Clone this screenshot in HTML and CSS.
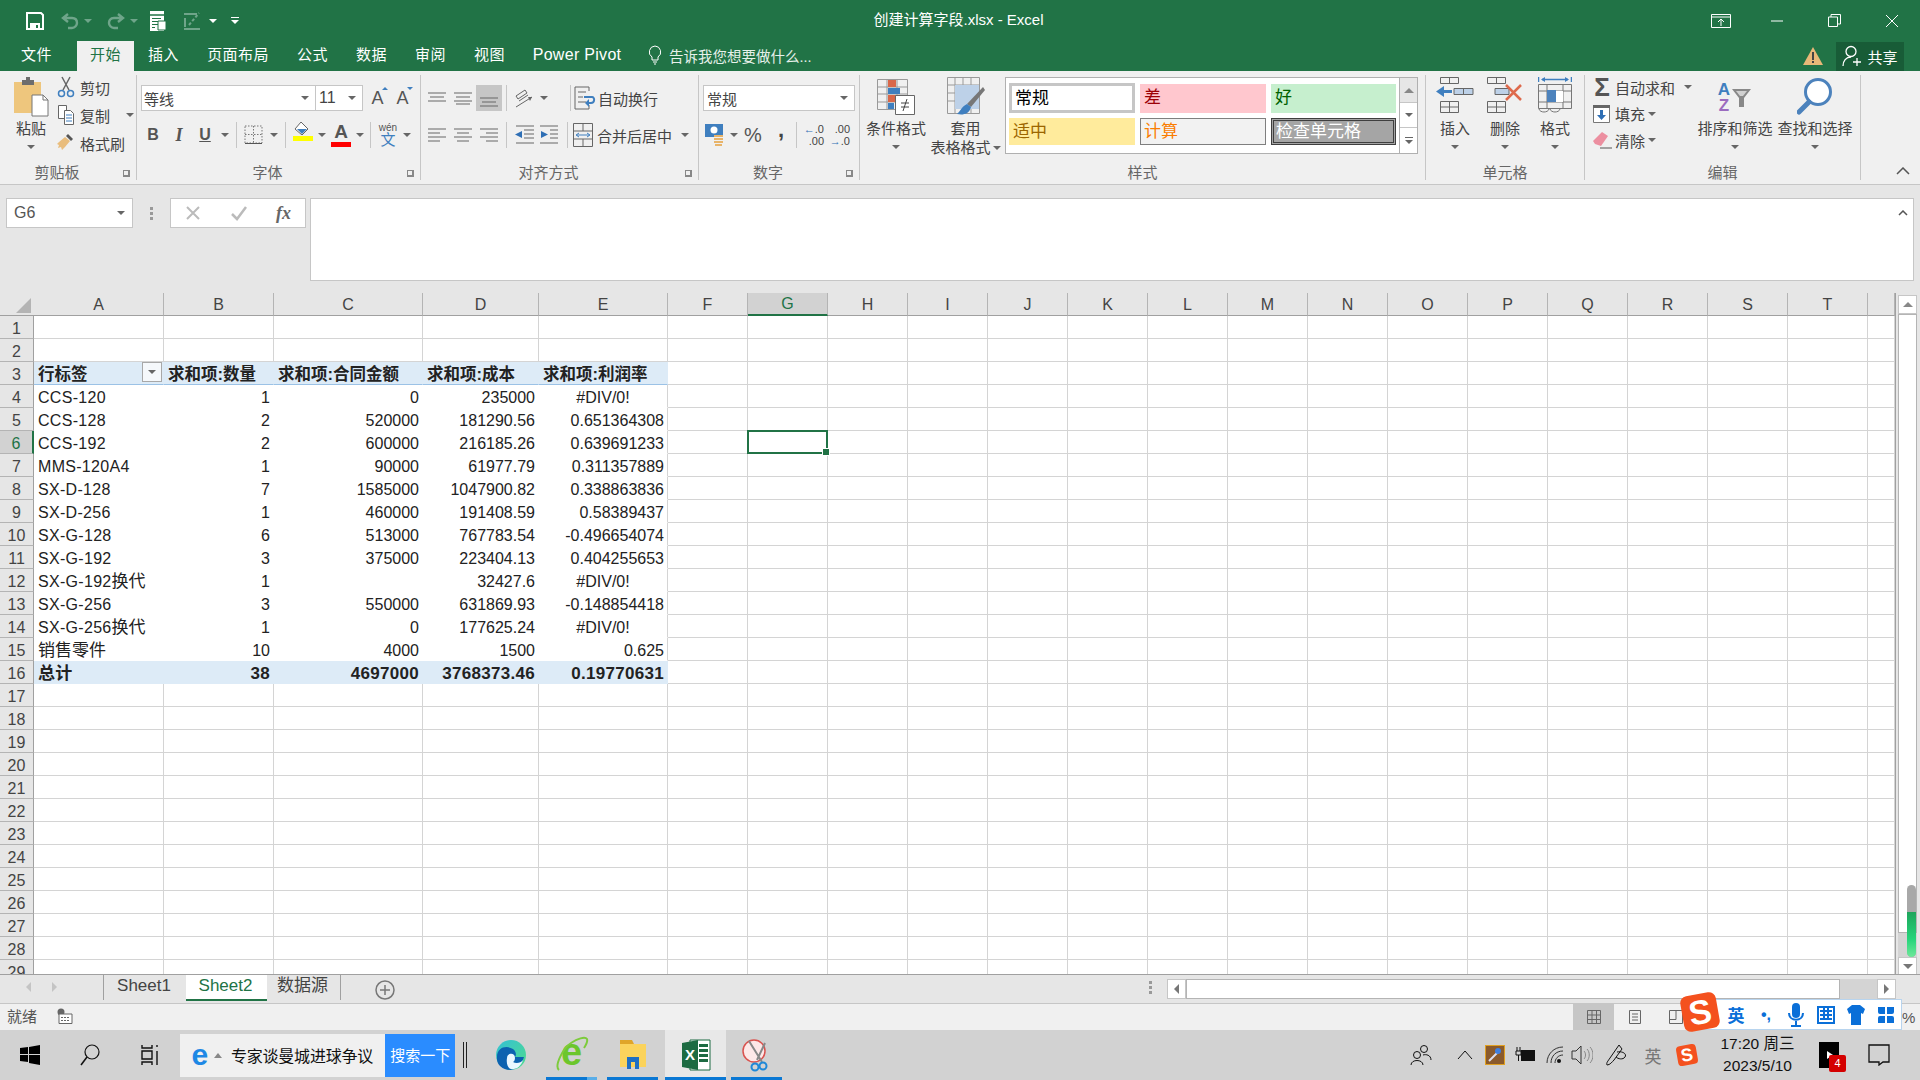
FILE: index.html
```html
<!DOCTYPE html>
<html lang="zh-CN">
<head>
    <meta charset="UTF-8">
    <title>创建计算字段.xlsx - Excel</title>
    <link rel="stylesheet" href="styles.css">
</head>
<body>

    <!-- title bar -->
    <div class="titlebar">
        <div class="qat">
            <span class="qat-btn save"><svg width="18" height="18" viewBox="0 0 18 18"><path d="M1 1h14l2 2v14H1z" fill="none" stroke="#fff" stroke-width="2"/><path d="M4 2h9v5H4z" fill="#217346"/><path d="M4 11h10v6H4z" fill="#fff"/><path d="M10 13h2v3h-2z" fill="#217346"/></svg></span>
            <span class="qat-btn undo"><svg width="20" height="18" viewBox="0 0 20 18"><path d="M8 2 3 6l5 4M3 6h9c4 0 5 3 5 5s-2 5-5 5H8" fill="none" stroke="#6fa58a" stroke-width="2.4"/></svg></span>
            <i class="caret caret-dim"></i>
            <span class="qat-btn redo"><svg width="20" height="18" viewBox="0 0 20 18"><path d="m12 2 5 4-5 4m5-4H8c-4 0-5 3-5 5s2 5 5 5h4" fill="none" stroke="#6fa58a" stroke-width="2.4"/></svg></span>
            <i class="caret caret-dim"></i>
            <span class="qat-btn preview"><svg width="20" height="22" viewBox="0 0 20 22"><path d="M2 1h14v20H2z" fill="#fff"/><path d="M2 5h14" stroke="#217346" stroke-width="1.5"/><path d="M4 8h9v1H4zm0 3h6v1H4zm0 3h6v1H4zm0 3h3v1H4z" fill="#217346"/><path d="M10 11h8v9h-8z" fill="#fff" stroke="#217346"/></svg></span>
            <span class="qat-btn dotted"><svg width="22" height="22" viewBox="0 0 22 22"><path d="M3 3h13v2H3zM3 8h2v9H3zM3 18h16v2H3z" fill="#6fa58a"/><path d="m8 15 10-12" stroke="#6fa58a" stroke-width="2" stroke-dasharray="3 2"/></svg></span>
            <i class="caret caret-white"></i>
            <span class="qat-custom"><i class="dash"></i><i class="caret caret-white"></i></span>
        </div>
        <div class="doc-title">创建计算字段.xlsx - Excel</div>
        <div class="window-btns">
            <span class="win-btn"><svg width="20" height="14" viewBox="0 0 20 14"><path d="M.5.5h19v13H.5zM1 3h18M10 12V5M7 8l3-3 3 3" fill="none" stroke="#fff"/></svg></span>
            <span class="win-btn"><svg width="14" height="2" viewBox="0 0 14 2"><path d="M0 1h12" stroke="#fff"/></svg></span>
            <span class="win-btn"><svg width="13" height="13" viewBox="0 0 13 13"><path d="M.5 3h9v9.5h-9zM3 3V.5h9.5V10H10" fill="none" stroke="#fff"/></svg></span>
            <span class="win-btn"><svg width="14" height="14" viewBox="0 0 14 14"><path d="m1 1 12 12M13 1 1 13" stroke="#fff"/></svg></span>
        </div>
    </div>

    <!-- ribbon tabs -->
    <div class="tabbar">
        <span class="tab tab-file">文件</span>
        <span class="tab tab-active">开始</span>
        <span class="tab">插入</span>
        <span class="tab tab-four">页面布局</span>
        <span class="tab">公式</span>
        <span class="tab">数据</span>
        <span class="tab">审阅</span>
        <span class="tab">视图</span>
        <span class="tab tab-pivot">Power Pivot</span>
        <span class="tell-me">
            <svg width="14" height="20" viewBox="0 0 14 20"><path d="M7 1a6 6 0 0 0-3 11v3h6v-3A6 6 0 0 0 7 1zM5 17h4M6 19h2" fill="none" stroke="#fff"/></svg>
            告诉我您想要做什么...
        </span>
        <span class="warn"><svg width="20" height="18" viewBox="0 0 20 18"><path d="M10 0 20 18H0z" fill="#e8b878"/><path d="M9 5h2v8H9zm0 9h2v2H9z" fill="#444"/></svg></span>
        <span class="share">
            <svg width="22" height="22" viewBox="0 0 22 22"><circle cx="9" cy="6.5" r="5" fill="none" stroke="#fff" stroke-width="1.3"/><path d="M1 21c0-5 3-9 8-9M15 13v8M11 17h8" fill="none" stroke="#fff" stroke-width="1.3"/></svg>
            共享
        </span>
    </div>

    <!-- ribbon -->
    <div class="ribbon">
        <div class="group group-clip">
            <div class="group-body">
                <div class="large large-paste">
                    <div class="large-icon">
                        <svg width="36" height="40" viewBox="0 0 36 40"><path d="M1 5h27v31H1z" fill="#eec67d"/><path d="M9 3h4V0h4v3h4v5H9z" fill="#6d6d6d"/><path d="M19 18h11l5 5v16H19z" fill="#fff" stroke="#777"/><path d="M30 18v5h5" fill="none" stroke="#777"/></svg>
                    </div>
                    <div class="large-label">粘贴</div>
                    <i class="caret caret-low"></i>
                </div>
                <div class="small-col">
                    <div class="small-row">
                        <span class="small-icon"><svg width="18" height="22" viewBox="0 0 18 22"><path d="m5 1 7 13M13 1 6 14" stroke="#666" stroke-width="1.5"/><circle cx="4.5" cy="17.5" r="3" fill="none" stroke="#3f7fbf" stroke-width="1.5"/><circle cx="13.5" cy="17.5" r="3" fill="none" stroke="#3f7fbf" stroke-width="1.5"/></svg></span>
                        剪切
                    </div>
                    <div class="small-row">
                        <span class="small-icon"><svg width="18" height="22" viewBox="0 0 18 22"><path d="M1.5 1.5h8v13h-8z" fill="#fff" stroke="#666"/><path d="M7.5 6.5h6l3 3v11h-9z" fill="#fff" stroke="#666"/><path d="M9 11h6M9 14h6M9 17h6" stroke="#3f7fbf"/></svg></span>
                        复制<i class="caret caret-copy"></i>
                    </div>
                    <div class="small-row">
                        <span class="small-icon"><svg width="20" height="20" viewBox="0 0 20 20"><path d="m12 1 5 5-2 2-5-5z" fill="#555"/><path d="M9 4 3 9l-2 2 2 1-1 3 3-1 1 3 3-3 5-6z" fill="#e9bd7d"/></svg></span>
                        格式刷
                    </div>
                </div>
            </div>
            <div class="group-label label-left">剪贴板</div>
            <i class="launcher"></i>
        </div>

        <div class="group group-font">
            <div class="group-body group-rows">
                <div class="tool-row">
                    <div class="select select-font">等线<i class="caret"></i></div>
                    <div class="select select-size">11<i class="caret"></i></div>
                    <span class="font-resize">A<i class="mini-up"></i></span>
                    <span class="font-resize">A<i class="mini-down"></i></span>
                </div>
                <div class="tool-row tool-row-low">
                    <span class="tool tool-b">B</span>
                    <span class="tool tool-i">I</span>
                    <span class="tool tool-u">U</span>
                    <span class="tool-caret"><i class="caret"></i></span>
                    <i class="sep"></i>
                    <span class="tool"><svg width="20" height="20" viewBox="0 0 20 20"><path d="M1 1h17v17H1zM9.5 1v17M1 9.5h17" fill="none" stroke="#777" stroke-dasharray="1.5 1.5"/><path d="M1 18.5h17" stroke="#555"/></svg></span>
                    <span class="tool-caret"><i class="caret"></i></span>
                    <i class="sep"></i>
                    <span class="tool color-tool"><svg width="20" height="13" viewBox="0 0 20 13"><path d="m8 0 7 7-6 6-7-6z" fill="#fff" stroke="#666"/><path d="m4 7 5 5 5-5z" fill="#3f7fbf"/></svg><i class="color-bar color-yellow"></i></span>
                    <span class="tool-caret tool-caret-tight"><i class="caret"></i></span>
                    <span class="tool color-tool font-color">A<i class="color-bar color-red"></i></span>
                    <span class="tool-caret tool-caret-tight"><i class="caret"></i></span>
                    <i class="sep"></i>
                    <span class="tool wen"><small>wén</small>文</span>
                    <span class="tool-caret tool-caret-tight"><i class="caret"></i></span>
                </div>
            </div>
            <div class="group-label label-left">字体</div>
            <i class="launcher"></i>
        </div>

        <div class="group group-align">
            <div class="group-body group-rows">
                <div class="tool-row">
                    <span class="tool"><svg width="18" height="12" viewBox="0 0 18 12"><path d="M0 1h18M2 5h14M0 9h18" stroke="#666"/></svg></span>
                    <span class="tool"><svg width="18" height="14" viewBox="0 0 18 14"><path d="M0 2h18M2 6h14M0 10h18M2 13h14" stroke="#666"/></svg></span>
                    <span class="tool tool-on"><svg width="18" height="20" viewBox="0 0 18 20"><path d="M0 10h18M2 14h14M0 18h18" stroke="#666"/></svg></span>
                    <i class="sep"></i>
                    <span class="tool"><svg width="20" height="20" viewBox="0 0 20 20"><path d="m2 8 9-6 2 3-9 6zM5 13l9-6M2 19 18 9" fill="none" stroke="#666"/><path d="m18 9-4 0 2 4z" fill="#666"/></svg></span>
                    <span class="tool-caret"><i class="caret"></i></span>
                    <i class="sep sep-far"></i>
                    <span class="small-icon small-icon-wrap"><svg width="22" height="24" viewBox="0 0 22 24"><path d="M1 1h14v4M1 1v22h14v-4" fill="none" stroke="#666"/><path d="M4 6h8M4 11h5M4 16h8" stroke="#666"/><path d="M10 11h8c3 0 3 6-1 6h-3" fill="none" stroke="#3f7fbf" stroke-width="2"/><path d="m15 13-4 4 4 4z" fill="#3f7fbf"/></svg></span>
                    <span class="row-text">自动换行</span>
                </div>
                <div class="tool-row tool-row-low">
                    <span class="tool"><svg width="18" height="14" viewBox="0 0 18 14"><path d="M0 1h18M0 5h12M0 9h18M0 13h12" stroke="#666"/></svg></span>
                    <span class="tool"><svg width="18" height="14" viewBox="0 0 18 14"><path d="M0 1h18M3 5h12M0 9h18M3 13h12" stroke="#666"/></svg></span>
                    <span class="tool"><svg width="18" height="14" viewBox="0 0 18 14"><path d="M0 1h18M6 5h12M0 9h18M6 13h12" stroke="#666"/></svg></span>
                    <i class="sep"></i>
                    <span class="tool"><svg width="20" height="20" viewBox="0 0 20 20"><path d="M2 1h18M10 5h10M10 9h10M10 13h10M2 18h18" stroke="#666"/><path d="M8 6v7L1 9.5z" fill="#2f6fb5"/></svg></span>
                    <span class="tool"><svg width="20" height="20" viewBox="0 0 20 20"><path d="M0 1h18M10 5h8M10 9h8M10 13h8M0 18h18" stroke="#666"/><path d="M1 6v7l7-3.5z" fill="#2f6fb5"/></svg></span>
                    <i class="sep sep-merge"></i>
                    <span class="small-icon small-icon-merge"><svg width="20" height="24" viewBox="0 0 20 24"><path d="M.5.5h19v23H.5zM.5 8h19M.5 16h19M10 .5V8M10 16v7.5" fill="none" stroke="#666"/><path d="M4 12h12M6 10l-3 2 3 2M14 10l3 2-3 2" fill="none" stroke="#3f7fbf"/></svg></span>
                    <span class="row-text">合并后居中</span><i class="caret caret-merge"></i>
                </div>
            </div>
            <div class="group-label label-left">对齐方式</div>
            <i class="launcher"></i>
        </div>

        <div class="group group-number">
            <div class="group-body group-rows">
                <div class="tool-row">
                    <div class="select select-format">常规<i class="caret"></i></div>
                </div>
                <div class="tool-row tool-row-low">
                    <span class="tool"><svg width="20" height="24" viewBox="0 0 20 24"><path d="M0 1h18v13H0z" fill="#3f7fbf"/><circle cx="9" cy="7" r="3.5" fill="#fff"/><path d="M9 12h9v2H9zm0 3h9v2H9zm0 3h9v2H9zm1 3h7v2h-7z" fill="#e8b46a"/></svg></span>
                    <span class="tool-caret tool-caret-tight"><i class="caret"></i></span>
                    <span class="tool tool-percent">%</span>
                    <span class="tool tool-comma">,</span>
                    <i class="sep"></i>
                    <span class="tool dec-tool"><em class="blue-arrow">←</em>.0<br>.00</span>
                    <span class="tool dec-tool">.00<br><em class="blue-arrow">→</em>.0</span>
                </div>
            </div>
            <div class="group-label label-left">数字</div>
            <i class="launcher"></i>
        </div>

        <div class="group group-styles">
            <div class="group-body">
                <div class="large large-cond">
                    <div class="large-icon">
                        <svg width="38" height="38" viewBox="0 0 38 38"><path d="M.5 2.5h30v30H.5zM10 2.5v30M20 2.5v30M.5 10h30M.5 17h30M.5 25h30" fill="none" stroke="#999"/><path d="M11 3h8v7h-8z" fill="#d9684a"/><path d="M11 11h12v6H11z" fill="#3f7fbf"/><path d="M11 18h9v7h-9z" fill="#d9684a"/><path d="M11 26h6v6h-6z" fill="#3f7fbf"/><path d="M18.5 18.5h19v19h-19z" fill="#fff" stroke="#666"/><path d="M24 26h8M24 30h8M30 22l-4 12" stroke="#444"/></svg>
                    </div>
                    <div class="large-label">条件格式</div>
                    <i class="caret caret-low"></i>
                </div>
                <div class="large large-table">
                    <div class="large-icon">
                        <svg width="38" height="42" viewBox="0 0 38 42"><path d="M.5.5h32v36H.5zM8 .5v36M16 .5v36M24 .5v36M.5 8h32M.5 16h32M.5 24h32" fill="none" stroke="#999"/><path d="M8 8h24v24H8z" fill="#bdd1e8"/><path d="M36 10 38 13 24 30l-4-3z" fill="#777"/><path d="M20 27l4 3c-2 8-9 8-14 7 3-2 4-7 10-10z" fill="#3f7fbf"/></svg>
                    </div>
                    <div class="large-label">套用</div>
                    <div class="large-label label-caret">表格格式<i class="caret"></i></div>
                </div>
                <div class="gallery">
                    <div class="gallery-items">
                        <span class="gal gal-normal">常规</span>
                        <span class="gal gal-bad">差</span>
                        <span class="gal gal-good">好</span>
                        <span class="gal gal-neutral">适中</span>
                        <span class="gal gal-calc">计算</span>
                        <span class="gal gal-check">检查单元格</span>
                    </div>
                    <div class="gallery-scroll">
                        <span class="gal-btn gal-btn-up"><i class="tri-up"></i></span>
                        <span class="gal-btn"><i class="caret"></i></span>
                        <span class="gal-btn gal-btn-more"><i class="dash dash-dark"></i><i class="caret"></i></span>
                    </div>
                </div>
            </div>
            <div class="group-label">样式</div>
        </div>

        <div class="group group-cells">
            <div class="group-body">
                <div class="large large-cell">
                    <div class="large-icon">
                        <svg width="38" height="36" viewBox="0 0 38 36"><path d="M4.5.5h18v6h-18zM13.5.5v6M4.5 24.5h18v11h-18zM4.5 30h18M13.5 24.5v11" fill="none" stroke="#666"/><path d="M18 11.5h19v6H18zM27.5 11.5v6" fill="#bdd1e8" stroke="#666"/><path d="M16 13h-8V9L0 14.5 8 20v-4h8z" fill="#3f7fbf"/></svg>
                    </div>
                    <div class="large-label">插入</div>
                    <i class="caret caret-low"></i>
                </div>
                <div class="large large-cell">
                    <div class="large-icon">
                        <svg width="36" height="36" viewBox="0 0 36 36"><path d="M.5.5h18v6H.5zM9.5.5v6M.5 24.5h18v11H.5zM.5 30h18M9.5 24.5v11" fill="none" stroke="#666"/><path d="M8 11.5h14v6H8z" fill="#bdd1e8" stroke="#666"/><path d="m19 8 15 15M34 8 19 23" stroke="#de6a4c" stroke-width="2.5"/></svg>
                    </div>
                    <div class="large-label">删除</div>
                    <i class="caret caret-low"></i>
                </div>
                <div class="large large-cell">
                    <div class="large-icon">
                        <svg width="34" height="38" viewBox="0 0 34 38"><path d="M.5 0v5M33.5 0v5M4 2.5h26" stroke="#3f7fbf" stroke-width="1.5" fill="none"/><path d="M7 0 3 2.5 7 5zM27 0l4 2.5L27 5z" fill="#3f7fbf"/><path d="M.5 7.5h33v24H.5zM.5 14h33M.5 25h33M9 7.5v24M25 7.5v24" fill="none" stroke="#777"/><path d="M9 14h16v11H9z" fill="#fff"/><path d="M9 13h9v12H9z" fill="#4c82bc"/><path d="M1 32c1 4 9 4 10 0M12 32c1 4 9 4 10 0" fill="none" stroke="#777"/></svg>
                    </div>
                    <div class="large-label">格式</div>
                    <i class="caret caret-low"></i>
                </div>
            </div>
            <div class="group-label">单元格</div>
        </div>

        <div class="group group-edit">
            <div class="group-body">
                <div class="small-col small-col-edit">
                    <div class="small-row">
                        <span class="small-icon small-icon-sum">Σ</span>
                        <span class="edit-text">自动求和</span><i class="caret caret-sum"></i>
                    </div>
                    <div class="small-row">
                        <span class="small-icon"><svg width="18" height="18" viewBox="0 0 18 18"><path d="M.5.5h16v17H.5z" fill="#fff" stroke="#777"/><path d="M0 0h17v3H0z" fill="#666"/><path d="M7 5h3v5h3l-4.5 5L4 10h3z" fill="#2f6fb5"/></svg></span>
                        <span class="edit-text">填充</span><i class="caret caret-near"></i>
                    </div>
                    <div class="small-row">
                        <span class="small-icon"><svg width="20" height="18" viewBox="0 0 20 18"><path d="m10 1 6 4-7 10-6-2-2-3z" fill="#ec8fa0"/><path d="M8 17h12" stroke="#555"/></svg></span>
                        <span class="edit-text">清除</span><i class="caret caret-near"></i>
                    </div>
                </div>
                <div class="large large-edit">
                    <div class="large-icon sort-icon">
                        <span class="az"><b class="az-a">A</b><b class="az-z">Z</b></span>
                        <svg width="20" height="18" viewBox="0 0 20 18"><path d="M0 0h19l-7 9v9H7V9z" fill="#888"/><path d="M4 2h11l-4 5H8z" fill="#d0d0d0"/></svg>
                    </div>
                    <div class="large-label">排序和筛选</div>
                    <i class="caret caret-low"></i>
                </div>
                <div class="large large-edit">
                    <div class="large-icon">
                        <svg width="36" height="38" viewBox="0 0 36 38"><circle cx="21" cy="15" r="12.5" fill="#fff" stroke="#4c82bc" stroke-width="3"/><path d="m12 25-10 10" stroke="#4c82bc" stroke-width="5" stroke-linecap="round"/></svg>
                    </div>
                    <div class="large-label">查找和选择</div>
                    <i class="caret caret-low"></i>
                </div>
            </div>
            <div class="group-label">编辑</div>
        </div>

        <div class="ribbon-end">
            <svg width="14" height="8" viewBox="0 0 14 8"><path d="m1 7 6-6 6 6" fill="none" stroke="#555" stroke-width="1.5"/></svg>
        </div>
    </div>

    <!-- formula bar -->
    <div class="formula-area">
        <div class="name-box">G6<i class="caret"></i></div>
        <div class="grip"><i></i><i></i><i></i></div>
        <div class="fx-box">
            <svg width="16" height="16" viewBox="0 0 16 16"><path d="m2 2 12 12M14 2 2 14" stroke="#bbb" stroke-width="2"/></svg>
            <svg width="18" height="16" viewBox="0 0 18 16"><path d="m2 9 5 5L16 2" fill="none" stroke="#bbb" stroke-width="2.5"/></svg>
            <span class="fx-text">fx</span>
        </div>
        <div class="formula-input">
            <svg width="10" height="6" viewBox="0 0 10 6"><path d="m1 5 4-4 4 4" fill="none" stroke="#555" stroke-width="1.5"/></svg>
        </div>
    </div>

    <!-- sheet -->
    <div class="sheet">
        <div class="grid-wrap">
            <table class="grid" id="grid"></table>
        </div>
        <div class="vscroll">
            <span class="scroll-btn"><i class="tri-up"></i></span>
            <span class="vthumb"></span>
            <span class="vtrack"></span>
            <span class="scroll-btn"><i class="tri-down"></i></span>
            <span class="green-meter"><i></i></span>
        </div>
    </div>

    <!-- sheet tabs -->
    <div class="sheet-tabs">
        <div class="tab-nav"><i class="nav-left"></i><i class="nav-right"></i></div>
        <span class="sheet-tab">Sheet1</span>
        <span class="sheet-tab sheet-tab-active">Sheet2</span>
        <span class="sheet-tab sheet-tab-last">数据源</span>
        <span class="add-sheet"><svg width="20" height="20" viewBox="0 0 20 20"><circle cx="10" cy="10" r="9" fill="none" stroke="#777" stroke-width="1.5"/><path d="M10 5v10M5 10h10" stroke="#777" stroke-width="1.5"/></svg></span>
        <div class="grip grip-tabs"><i></i><i></i><i></i></div>
        <div class="hscroll">
            <span class="scroll-btn scroll-btn-h"><i class="tri-left"></i></span>
            <span class="hthumb"></span>
            <span class="htrack"></span>
            <span class="scroll-btn scroll-btn-h"><i class="tri-right"></i></span>
        </div>
    </div>

    <!-- status bar -->
    <div class="statusbar">
        <span class="status-text">就绪</span>
        <span class="macro"><svg width="16" height="16" viewBox="0 0 16 16"><circle cx="4" cy="4" r="3.5" fill="#666"/><path d="M2 6h13v9.5H2z" fill="#fff" stroke="#666"/><path d="M4 9h2v1H4zm3 0h2v1H7zm3 0h2v1h-2zm-6 3h2v1H4zm3 0h2v1H7zm3 0h2v1h-2z" fill="#666"/></svg></span>
        <div class="view-btns">
            <span class="view-btn view-on"><svg width="14" height="14" viewBox="0 0 14 14"><path d="M.5.5h13v13H.5zM5 .5v13M9.5.5v13M.5 5h13M.5 9.5h13" fill="none" stroke="#666"/></svg></span>
            <span class="view-btn"><svg width="14" height="14" viewBox="0 0 14 14"><path d="M1.5.5h11v13h-11zM4 4h6M4 7h6M4 10h6" fill="none" stroke="#666"/></svg></span>
            <span class="view-btn"><svg width="14" height="14" viewBox="0 0 14 14"><path d="M.5.5h13v13H.5zM7 .5v9H.5" fill="none" stroke="#666"/></svg></span>
        </div>
        <span class="zoom-text">%</span>
        <div class="sogou-bar">
            <span class="sogou-logo">S</span>
            <span class="sogou-item sogou-cn">英</span>
            <span class="sogou-item sogou-punct">•,</span>
            <span class="sogou-item"><svg width="16" height="24" viewBox="0 0 16 24"><rect x="4" y="0" width="8" height="15" rx="4" fill="#0a6fd8"/><path d="M1 10c0 9 14 9 14 0M8 18v4M3 23h10" fill="none" stroke="#0a6fd8" stroke-width="2"/></svg></span>
            <span class="sogou-item"><svg width="18" height="18" viewBox="0 0 18 18"><path d="M1 1h16v16H1z" fill="#fff" stroke="#0a6fd8" stroke-width="2"/><path d="M3 5h12M3 9h12M3 13h12M7 2v12M11 2v12" stroke="#0a6fd8" stroke-width="2"/></svg></span>
            <span class="sogou-item"><svg width="18" height="20" viewBox="0 0 18 20"><path d="M5 0h8l5 4-2 5-2-1v12H4V8L2 9 0 4z" fill="#0a6fd8"/></svg></span>
            <span class="sogou-item"><svg width="18" height="18" viewBox="0 0 18 18"><path d="M1 1h7v7H3a2 2 0 0 1-2-2zm16 0h-7v7h5a2 2 0 0 0 2-2zM1 17h7v-7H3a2 2 0 0 0-2 2zm16 0h-7v-7h5a2 2 0 0 1 2 2z" fill="#0a6fd8"/></svg></span>
        </div>
    </div>

    <!-- taskbar -->
    <div class="taskbar">
        <span class="task-icon"><svg width="20" height="20" viewBox="0 0 20 20"><path d="M0 3l8-1v7H0zm9-1 11-2v9H9zM0 10h8v7l-8-1zm9 0h11v10L9 18z" fill="#000"/></svg></span>
        <span class="task-icon"><svg width="20" height="22" viewBox="0 0 20 22"><circle cx="12" cy="8" r="7" fill="none" stroke="#111" stroke-width="1.2"/><path d="m7 13-6 8" stroke="#111" stroke-width="1.5"/></svg></span>
        <span class="task-icon"><svg width="22" height="22" viewBox="0 0 22 22"><path d="M3 1v3h10V1M3 21v-3h10v3M3 7h10v8H3zM18 1v2M18 7v14" fill="none" stroke="#111" stroke-width="1.4"/></svg></span>
        <div class="task-search">
            <span class="ie-mark">e</span><i class="tri-up tri-small"></i>
            <span class="task-search-text">专家谈曼城进球争议</span>
            <span class="task-search-btn">搜索一下</span>
        </div>
        <span class="task-pipe"></span>
        <span class="app app-edge"><svg width="32" height="32" viewBox="0 0 32 32"><defs><linearGradient id="edgeA" x1="0" y1="0" x2="1" y2="1"><stop offset="0" stop-color="#35c1d6"/><stop offset="1" stop-color="#4fdc8b"/></linearGradient></defs><circle cx="16" cy="16" r="15" fill="url(#edgeA)"/><path d="M2 18C2 8 12 6 18 10c4 3 3 7 2 8h9c-2 8-9 13-14 13C7 31 1 25 2 18z" fill="#0c62b0"/><path d="M12 19c0-5 8-6 8 0 0 3-2 4-2 4 3 2 8 1 10-2-2 7-8 10-12 9-3-1-5-5-4-11z" fill="#eaf7ff"/></svg></span>
        <span class="app run"><span class="ie-green">e</span><svg class="ie-ring" width="34" height="36" viewBox="0 0 34 36"><path d="M4 34C-1 30 8 12 16 7c6-4 14-7 16-4 1 3-1 6-3 9" fill="none" stroke="#7dcb3c" stroke-width="2"/></svg><i class="run-bar run-bar-split"></i></span>
        <span class="app run"><svg width="28" height="32" viewBox="0 0 28 32"><path d="M1 1h12l2 4H1z" fill="#e0a528"/><path d="M1 5h26v23H1z" fill="#fbd35c"/><path d="M8 18h12v12h-4v-7h-4v7H8z" fill="#1f6fc4"/></svg><i class="run-bar"></i></span>
        <span class="app run app-on"><svg width="30" height="32" viewBox="0 0 30 32"><path d="M9 1h20v30H9z" fill="#fff" stroke="#1d6b42"/><path d="M18 5h9v3h-9zm0 5h9v3h-9zm0 5h9v3h-9zm0 5h9v3h-9z" fill="#1d6b42"/><path d="M1 4 17 1v30L1 28z" fill="#1d6b42"/><text x="4" y="21" class="excel-x">X</text></svg><i class="run-bar"></i></span>
        <span class="app run"><svg width="32" height="34" viewBox="0 0 32 34"><circle cx="13" cy="13" r="11" fill="#fde8e8" stroke="#d9534f" stroke-width="1.5"/><path d="M8 3 21 24M24 5 16 22" stroke="#888" stroke-width="2"/><circle cx="22" cy="28" r="3.5" fill="none" stroke="#1e88d8" stroke-width="2"/><circle cx="14" cy="29" r="3.5" fill="none" stroke="#1e88d8" stroke-width="2"/></svg><i class="run-bar"></i></span>
        <div class="tray">
            <span class="tray-item tray-people"><svg width="22" height="22" viewBox="0 0 22 22"><circle cx="14" cy="5" r="3.5" fill="none" stroke="#111"/><circle cx="7" cy="11" r="3.5" fill="none" stroke="#111"/><path d="M1 21c0-6 12-6 12 0M13 11c3-1 8 0 8 5" fill="none" stroke="#111"/></svg></span>
            <span class="tray-item tray-chev"><svg width="16" height="10" viewBox="0 0 16 10"><path d="m1 9 7-8 7 8" fill="none" stroke="#111"/></svg></span>
            <span class="tray-item"><svg width="20" height="20" viewBox="0 0 20 20"><path d="M0 0h20v20H0z" fill="#8a5a2c"/><path d="M0 0h20v20H0z" fill="none" stroke="#e0a020" stroke-width="2"/><path d="m4 16 9-9" stroke="#dde" stroke-width="2"/><circle cx="13" cy="6" r="3" fill="#3f7fdf"/></svg></span>
            <span class="tray-item"><svg width="20" height="16" viewBox="0 0 20 16"><path d="M2 0v4M5 0v4M1 4h5v4H1zM3.5 8v6" stroke="#111" fill="none"/><path d="M6 3h14v11H6z" fill="#111"/></svg></span>
            <span class="tray-item"><svg width="18" height="18" viewBox="0 0 18 18"><path d="M1 17C1 8 8 1 17 1M5 17c0-7 5-12 12-12M9 17c0-4 3-8 8-8" fill="none" stroke="#333"/><circle cx="13" cy="15" r="2" fill="#111"/></svg></span>
            <span class="tray-item tray-sound"><svg width="22" height="20" viewBox="0 0 22 20"><path d="M1 6h4l5-5v18l-5-5H1z" fill="none" stroke="#333"/><path d="M13 6c2 2 2 6 0 8M16 4c3 3 3 9 0 12M19 2c4 4 4 12 0 16" fill="none" stroke="#888"/></svg></span>
            <span class="tray-item tray-pen"><svg width="24" height="22" viewBox="0 0 24 22"><path d="M14 1 5 14c-2 3-4 5-3 7 3 0 5-3 7-5l8-11zM12 8c6-1 10 2 8 5s-7 2-9 0" fill="none" stroke="#111"/></svg></span>
            <span class="tray-item tray-ying">英</span>
            <span class="tray-item"><span class="sogou-tray">S</span></span>
            <div class="clock">
                <div>17:20 周三</div>
                <div>2023/5/10</div>
            </div>
            <span class="tray-item tray-video"><svg width="20" height="26" viewBox="0 0 20 26"><path d="M0 0h20v26H0z" fill="#000"/><path d="m8 9 6 4-6 4z" fill="#fff"/></svg><b class="badge">4</b></span>
            <span class="tray-item tray-note"><svg width="22" height="22" viewBox="0 0 22 22"><path d="M1 1h20v17h-6l-4 3v-3H1z" fill="none" stroke="#111" stroke-width="1.3"/></svg></span>
        </div>
    </div>

    <script src="script.js"></script>
</body>
</html>
```

FILE: styles.css
```css
* {
    margin: 0;
    padding: 0;
    box-sizing: border-box;
}
body {
    width: 1920px;
    height: 1080px;
    overflow: hidden;
    display: flex;
    flex-direction: column;
    background: #e6e6e6;
    color: #444;
    font-family: "Liberation Sans", "Noto Sans CJK SC", sans-serif;
    font-size: 15px;
}
i, em {
    font-style: normal;
}
svg {
    display: block;
    flex: none;
}

/* small shared bits */
.caret {
    display: inline-block;
    flex: none;
    width: 0;
    height: 0;
    border-left: 4px solid transparent;
    border-right: 4px solid transparent;
    border-top: 4px solid #666;
}
.caret-dim {
    border-top-color: #6fa58a;
}
.caret-white {
    border-top-color: #fff;
}
.caret-low {
    margin-top: 6px;
}
.dash {
    display: block;
    width: 8px;
    height: 1px;
    background: #fff;
    margin-bottom: 2px;
}
.dash-dark {
    background: #666;
}
.tri-up, .tri-down, .tri-left, .tri-right {
    display: block;
    width: 0;
    height: 0;
    border: 5px solid transparent;
}
.tri-up {
    border-bottom-color: #888;
    border-top-width: 0;
}
.tri-down {
    border-top-color: #777;
    border-bottom-width: 0;
}
.tri-left {
    border-right-color: #777;
    border-left-width: 0;
}
.tri-right {
    border-left-color: #777;
    border-right-width: 0;
}
.tri-small {
    border-width: 0 4px 5px;
}

/* title bar */
.titlebar {
    height: 41px;
    background: #217346;
    display: grid;
    grid-template-columns: 1fr auto 1fr;
    align-items: center;
}
.qat {
    display: flex;
    align-items: center;
    padding-left: 25px;
    height: 38px;
}
.qat-btn {
    width: 20px;
    display: flex;
    justify-content: center;
}
.undo {
    margin-left: 15px;
    margin-right: 4px;
}
.redo {
    margin-left: 14px;
    margin-right: 4px;
}
.preview {
    margin-left: 10px;
}
.dotted {
    margin-left: 14px;
    margin-right: 7px;
}
.qat-custom {
    margin-left: 14px;
    display: flex;
    flex-direction: column;
    align-items: center;
}
.doc-title {
    color: #fff;
    font-size: 15px;
    padding-bottom: 4px;
    padding-right: 3px;
}
.window-btns {
    display: flex;
    justify-content: flex-end;
    height: 38px;
}
.win-btn {
    width: 57px;
    display: flex;
    align-items: center;
    justify-content: center;
}

/* ribbon tabs */
.tabbar {
    height: 30px;
    background: #217346;
    display: flex;
    align-items: center;
    color: #fff;
    position: relative;
}
.tab {
    width: 59px;
    height: 30px;
    line-height: 27px;
    text-align: center;
    font-size: 15px;
    letter-spacing: .4px;
}
.tab-file {
    margin-left: 7px;
    margin-right: 11px;
}
.tab-active {
    width: 57px;
    background: #f0f0f0;
    color: #217346;
}
.tab-four {
    width: 90px;
}
.tab-pivot {
    width: 116px;
    font-size: 16px;
    letter-spacing: .3px;
}
.tell-me {
    display: flex;
    align-items: center;
    gap: 7px;
    margin-left: 13px;
    padding-bottom: 2px;
    font-size: 14.5px;
    color: #e6f0ea;
}
.warn {
    margin-left: auto;
    margin-right: 13px;
}
.share {
    width: 68px;
    height: 29px;
    margin-right: 16px;
    background: #185c37;
    display: flex;
    align-items: center;
    justify-content: center;
    gap: 3px;
    font-size: 15px;
}

/* ribbon */
.ribbon {
    height: 114px;
    padding: 4px 0 4px;
    background: #f0f0f0;
    border-bottom: 1px solid #c6c6c6;
    display: flex;
}
.group {
    position: relative;
    display: flex;
    flex-direction: column;
    border-right: 1px solid #c6c6c6;
    height: 105px;
}
.group-clip { width: 137px; }
.group-font { width: 284px; }
.group-align { width: 278px; }
.group-number { width: 161px; }
.group-styles { width: 566px; }
.group-cells { width: 159px; }
.group-edit { width: 276px; }
.group-body {
    height: 89px;
    display: flex;
}
.group-rows {
    flex-direction: column;
    padding-top: 10px;
}
.group-label {
    height: 16px;
    line-height: 17px;
    text-align: center;
    font-size: 15px;
    color: #666;
}
.label-left {
    padding-right: 22px;
}
.launcher {
    position: absolute;
    right: 6px;
    bottom: 3px;
    width: 7px;
    height: 7px;
    border-left: 1px solid #888;
    border-top: 1px solid #888;
    border-right: 2px solid #888;
    border-bottom: 2px solid #888;
}
.ribbon-end {
    flex: 1;
    display: flex;
    justify-content: flex-end;
    align-items: flex-end;
    padding: 0 10px 5px 0;
}

/* big buttons */
.large {
    display: flex;
    flex-direction: column;
    align-items: center;
    padding-top: 2px;
    flex: none;
}
.large-icon {
    height: 42px;
    display: flex;
    align-items: flex-start;
    justify-content: center;
}
.large-label {
    line-height: 20px;
    white-space: nowrap;
    font-size: 15px;
}
.label-caret {
    display: flex;
    align-items: center;
    gap: 2px;
    line-height: 18px;
}
.large-paste {
    width: 36px;
    margin-left: 13px;
}
.large-cond {
    width: 72px;
}
.large-table {
    width: 67px;
}
.large-cell {
    width: 50px;
}
.group-cells .group-body {
    padding-left: 4px;
}
.large-edit {
    width: 80px;
}
.sort-icon {
    gap: 2px;
    align-items: center;
}
.az {
    display: flex;
    flex-direction: column;
    align-items: center;
    font-size: 17px;
    line-height: 16px;
}
.az-a {
    color: #3f7fbf;
}
.az-z {
    color: #9b6cbf;
}

/* small buttons on the left of a group */
.small-col {
    margin-left: 7px;
    margin-top: -2px;
}
.small-row {
    height: 28px;
    display: flex;
    align-items: center;
    white-space: nowrap;
}
.small-icon {
    width: 20px;
    margin-right: 4px;
    display: flex;
    justify-content: center;
}
.caret-copy {
    margin-left: 16px;
}
.small-col-edit {
    margin-left: 7px;
    margin-top: -1px;
    width: 103px;
}
.small-col-edit .small-row {
    height: 26.5px;
}
.small-col-edit .small-icon {
    margin-right: 3px;
}
.small-icon-sum {
    font-size: 26px;
    line-height: 26px;
    font-weight: bold;
    color: #555;
}
.edit-text {
    font-size: 15px;
}
.caret-sum {
    margin-left: 9px;
}
.caret-near {
    margin-left: 3px;
}

/* rows of tools */
.tool-row {
    display: flex;
    align-items: center;
    height: 26px;
    padding-left: 3px;
}
.tool-row-low {
    margin-top: 11px;
}
.tool {
    width: 26px;
    height: 26px;
    flex: none;
    display: flex;
    align-items: center;
    justify-content: center;
}
.tool-on {
    background: #c6c6c6;
}
.tool-caret {
    width: 14px;
    display: flex;
    justify-content: center;
    flex: none;
}
.tool-caret-tight {
    width: 12px;
}
.sep {
    width: 1px;
    height: 26px;
    background: #c6c6c6;
    margin: 0 4px;
    flex: none;
}
.sep-far {
    margin-left: 19px;
    margin-right: 4px;
}
.sep-merge {
    margin-left: 4px;
    margin-right: 5px;
}
.small-icon-wrap {
    margin-right: 3px;
}
.small-icon-merge {
    margin-right: 4px;
}
.row-text {
    font-size: 15px;
    white-space: nowrap;
}
.caret-merge {
    margin-left: 9px;
}
.select {
    height: 26px;
    background: #fff;
    border: 1px solid #c6c6c6;
    display: flex;
    align-items: center;
    justify-content: space-between;
    padding: 0 6px 0 2px;
    font-size: 15px;
    flex: none;
}
.select-font {
    width: 175px;
    margin-left: 1px;
}
.select-size {
    width: 47px;
    border-left: 0;
    font-size: 16px;
    padding-left: 3px;
}
.select-format {
    width: 152px;
    margin-left: 1px;
    padding-left: 3px;
}
.font-resize {
    position: relative;
    width: 25px;
    text-align: center;
    font-size: 18px;
    color: #555;
}
.font-resize:first-of-type {
    margin-left: 2px;
}
.mini-up, .mini-down {
    position: absolute;
    right: 2px;
    top: -1px;
    border: 3px solid transparent;
}
.mini-up {
    border-bottom-color: #3f7fbf;
    top: -4px;
}
.mini-down {
    border-top-color: #3f7fbf;
}
.tool-b, .tool-i, .tool-u {
    font-size: 16px;
    color: #555;
}
.tool-b {
    font-weight: bold;
}
.tool-i {
    font-family: "Liberation Serif", serif;
    font-style: italic;
    font-weight: bold;
    font-size: 18px;
}
.tool-u {
    font-weight: bold;
    text-decoration: underline;
}
.color-tool {
    flex-direction: column;
    justify-content: flex-start;
}
.color-bar {
    display: block;
    width: 20px;
    height: 5px;
    margin-top: 1px;
}
.font-color {
    font-size: 19px;
    line-height: 19px;
    font-weight: bold;
    color: #555;
    margin-top: -1px;
}
.color-yellow {
    background: #ffff00;
}
.color-red {
    background: #ff0000;
}
.wen {
    flex-direction: column;
    color: #3f7fbf;
    font-size: 15px;
    line-height: 14px;
}
.wen small {
    font-size: 10px;
    line-height: 10px;
    color: #555;
}
.tool-percent {
    font-size: 20px;
    color: #555;
}
.tool-comma {
    font-size: 22px;
    font-weight: bold;
    padding-bottom: 10px;
    margin-left: 2px;
    margin-right: -2px;
}
.dec-tool {
    display: block;
    font-size: 11px;
    line-height: 12px;
    text-align: right;
    padding-top: 1px;
    padding-right: 3px;
}
.blue-arrow {
    color: #2f6fb5;
    font-weight: bold;
}

/* cell style gallery */
.gallery {
    display: flex;
    height: 77px;
    margin-top: 2px;
    margin-left: 6px;
}
.gallery-items {
    width: 395px;
    background: #fff;
    border: 1px solid #b0b0b0;
    padding: 6px 3px 0 3px;
    display: grid;
    grid-template-columns: 126px 126px 125px;
    grid-template-rows: 29px 27px;
    column-gap: 5px;
    row-gap: 5px;
}
.gal {
    font-size: 17px;
    line-height: 28px;
    padding-left: 4px;
    white-space: nowrap;
}
.gal-normal {
    border: 3px solid #c6c6c6;
    line-height: 25px;
    color: #000;
    padding-left: 3px;
    margin-top: -1px;
}
.gal-bad {
    background: #ffc7ce;
    color: #9c0006;
}
.gal-good {
    background: #c6efce;
    color: #006100;
}
.gal-neutral {
    background: #ffeb9c;
    color: #9c6500;
    line-height: 27px;
}
.gal-calc {
    background: #f2f2f2;
    border: 1px solid #7f7f7f;
    color: #fa7d00;
    line-height: 26px;
    padding-left: 3px;
}
.gal-check {
    background: #a5a5a5;
    border: 3px double #3f3f3f;
    color: #fff;
    line-height: 22px;
    padding-left: 2px;
}
.gallery-scroll {
    width: 18px;
    display: flex;
    flex-direction: column;
    border: 1px solid #b0b0b0;
    border-left: 0;
}
.gal-btn {
    height: 25px;
    background: #fff;
    border-bottom: 1px solid #c6c6c6;
    display: flex;
    flex-direction: column;
    align-items: center;
    justify-content: center;
}
.gal-btn-up {
    background: #e6e6e6;
}
.gal-btn-more {
    border-bottom: 0;
    flex: 1;
}

/* formula bar */
.formula-area {
    height: 108px;
    background: #e6e6e6;
    padding-top: 13px;
    display: flex;
    align-items: flex-start;
}
.name-box {
    width: 127px;
    height: 30px;
    margin-left: 6px;
    background: #fff;
    border: 1px solid #c6c6c6;
    display: flex;
    align-items: center;
    justify-content: space-between;
    padding: 0 7px;
    font-size: 16px;
    color: #555;
}
.grip {
    width: 37px;
    height: 30px;
    display: flex;
    flex-direction: column;
    align-items: center;
    justify-content: center;
    gap: 2px;
}
.grip i {
    display: block;
    width: 3px;
    height: 3px;
    background: #999;
}
.fx-box {
    width: 136px;
    height: 30px;
    background: #fff;
    border: 1px solid #c6c6c6;
    display: flex;
    align-items: center;
    justify-content: space-between;
    padding: 0 14px;
}
.fx-text {
    font-family: "Liberation Serif", serif;
    font-style: italic;
    font-weight: bold;
    font-size: 18px;
    color: #666;
}
.formula-input {
    width: 1604px;
    height: 83px;
    margin-left: 4px;
    background: #fff;
    border: 1px solid #c6c6c6;
    display: flex;
    justify-content: flex-end;
    padding: 11px 5px 0 0;
}

/* sheet */
.sheet {
    height: 681px;
    display: flex;
    overflow: hidden;
    background: #e6e6e6;
}
.grid-wrap {
    width: 1896px;
    height: 681px;
    overflow: hidden;
    border-right: 1px solid #a0a0a0;
}
.grid {
    table-layout: fixed;
    width: 1895px;
    border-collapse: separate;
    border-spacing: 0;
    background: #fff;
    font-size: 16px;
    color: #222;
}
.grid th, .grid td {
    height: 23px;
    padding: 3px 4px 0;
    line-height: 19px;
    white-space: nowrap;
    overflow: hidden;
    font-weight: normal;
    border-right: 1px solid #d4d4d4;
    border-bottom: 1px solid #d4d4d4;
}
.grid .col-head {
    height: 22px;
    padding: 1px 4px 0;
    line-height: 20px;
    background: #e6e6e6;
    border-right: 1px solid #b4b4b4;
    border-bottom: 1px solid #a0a0a0;
    text-align: center;
    color: #444;
}
.grid .col-on {
    background: #d2d2d2;
    color: #217346;
    border-bottom: 2px solid #217346;
}
.grid .corner {
    position: relative;
    border-right: 0;
}
.corner i {
    position: absolute;
    right: 3px;
    bottom: 2px;
    border-style: solid;
    border-width: 0 0 15px 15px;
    border-color: transparent transparent #b4b4b4 transparent;
}
.grid .row-head {
    padding: 3px 0 0;
    background: #e6e6e6;
    text-align: center;
    color: #444;
    border-right: 1px solid #a0a0a0;
    border-bottom: 1px solid #b4b4b4;
}
.grid .row-on {
    background: #d2d2d2;
    color: #217346;
    border-right: 2px solid #217346;
}
.grid .num {
    text-align: right;
    padding-right: 3px;
}
.center {
    text-align: center;
}
.text {
    letter-spacing: .3px;
}
.cjk {
    font-size: 17px;
    letter-spacing: 0;
}
.grid .plain {
    border-color: #fff;
}
.grid .plain-last {
    border-bottom-color: #fff;
}
.grid .pivot-head {
    position: relative;
    background: #ddebf7;
    font-size: 16.5px;
    font-weight: bold;
    border-color: #ddebf7;
    border-bottom-color: #9bc2e6;
}
.grid .pivot-total {
    background: #ddebf7;
    font-size: 17px;
    font-weight: bold;
    letter-spacing: .3px;
    border-color: #ddebf7;
}
.pivot-filter {
    position: absolute;
    right: 1px;
    top: 0;
    width: 20px;
    height: 20px;
    background: #f5f8fb;
    border: 1px solid #a8a8a8;
    display: flex;
    align-items: center;
    justify-content: center;
}
.grid .selected {
    position: relative;
    overflow: visible;
}
.selected i {
    position: absolute;
    left: -1px;
    right: -1px;
    top: -1px;
    bottom: -1px;
    border: 2px solid #217346;
}
.selected i::after {
    content: "";
    position: absolute;
    right: -4px;
    bottom: -4px;
    width: 6px;
    height: 6px;
    background: #217346;
    border: 1px solid #fff;
}

/* scroll bars */
.vscroll {
    position: relative;
    width: 24px;
    padding-left: 2px;
    display: flex;
    flex-direction: column;
}
.scroll-btn {
    width: 19px;
    height: 19px;
    background: #fff;
    border: 1px solid #c6c6c6;
    display: flex;
    align-items: center;
    justify-content: center;
    flex: none;
}
.vscroll .scroll-btn:first-child {
    margin-top: 2px;
}
.vthumb {
    width: 19px;
    height: 619px;
    background: #fff;
    border: 1px solid #b4b4b4;
    flex: none;
}
.vtrack {
    width: 19px;
    height: 24px;
    background: #d4d4d4;
    flex: none;
}
.green-meter {
    position: absolute;
    left: 11px;
    top: 592px;
    width: 9px;
    height: 72px;
    border-radius: 5px;
    background: #a8a8a8;
    overflow: hidden;
    display: flex;
    align-items: flex-end;
}
.green-meter i {
    display: block;
    width: 100%;
    height: 45px;
    background: linear-gradient(#1fa55c, #25d47a 60%, #6fe89a);
}

/* sheet tabs */
.sheet-tabs {
    height: 29px;
    background: #e6e6e6;
    border-top: 1px solid #a0a0a0;
    display: flex;
    align-items: flex-start;
}
.tab-nav {
    width: 103px;
    height: 24px;
    display: flex;
    align-items: center;
    padding-left: 26px;
    gap: 21px;
}
.nav-left, .nav-right {
    border: 5px solid transparent;
}
.nav-left {
    border-right-color: #c4c4c4;
    border-left-width: 0;
}
.nav-right {
    border-left-color: #c4c4c4;
    border-right-width: 0;
}
.sheet-tab {
    height: 25px;
    line-height: 22px;
    text-align: center;
    width: 83px;
    padding-right: 2px;
    font-size: 17px;
    color: #444;
    border-left: 1px solid #a0a0a0;
}
.sheet-tab-active {
    width: 81px;
    height: 26px;
    background: #fff;
    color: #217346;
    border-left: 0;
    border-bottom: 2px solid #217346;
}
.sheet-tab-last {
    width: 74px;
    border-left: 0;
    border-right: 1px solid #a0a0a0;
}
.add-sheet {
    margin-left: 34px;
    margin-top: 5px;
}
.grip-tabs {
    margin-left: 745px;
    width: 20px;
    height: 24px;
}
.hscroll {
    display: flex;
    margin-left: 7px;
    padding-top: 4px;
}
.scroll-btn-h {
    height: 20px;
}
.hthumb {
    width: 654px;
    height: 20px;
    background: #fff;
    border: 1px solid #b4b4b4;
}
.htrack {
    width: 37px;
    height: 20px;
    background: #d4d4d4;
}

/* status bar */
.statusbar {
    position: relative;
    height: 27px;
    background: #f0f0f0;
    border-top: 1px solid #c6c6c6;
    display: flex;
    align-items: center;
    padding-left: 7px;
}
.status-text {
    font-size: 15px;
    padding-bottom: 3px;
    color: #555;
}
.macro {
    margin-left: 20px;
    padding-bottom: 3px;
}
.view-btns {
    display: flex;
    margin-left: auto;
    height: 26px;
}
.view-btn {
    width: 41px;
    display: flex;
    align-items: center;
    justify-content: center;
}
.view-on {
    background: #c6c6c6;
}
.zoom-text {
    margin-left: 206px;
    margin-right: 5px;
    font-size: 15px;
    color: #555;
    width: 13px;
}
.sogou-bar {
    position: absolute;
    left: 1696px;
    top: -5px;
    width: 206px;
    height: 31px;
    background: #fff;
    border: 1px solid #b8d4ee;
    display: flex;
    align-items: center;
    padding-left: 24px;
}
.sogou-logo {
    position: absolute;
    left: -15px;
    top: -6px;
    width: 36px;
    height: 36px;
    border-radius: 7px;
    background: #f4511e;
    color: #fff;
    font-size: 34px;
    font-weight: bold;
    line-height: 36px;
    text-align: center;
    transform: rotate(-10deg);
}
.sogou-item {
    width: 31px;
    display: flex;
    justify-content: center;
    color: #0a6fd8;
}
.sogou-cn {
    font-size: 17px;
    font-weight: bold;
}
.sogou-punct {
    font-size: 16px;
    font-weight: bold;
}

/* taskbar */
.taskbar {
    height: 50px;
    background: #d2d2d2;
    display: flex;
    align-items: center;
    color: #111;
}
.task-icon {
    width: 60px;
    display: flex;
    justify-content: center;
}
.task-search {
    width: 275px;
    height: 43px;
    background: #f0f0f0;
    display: flex;
    align-items: center;
    padding-left: 8px;
}
.ie-mark {
    font-size: 30px;
    line-height: 30px;
    font-weight: bold;
    color: #1e88e5;
    width: 24px;
    margin-right: 2px;
    text-align: center;
}
.tri-small {
    margin-right: 9px;
}
.task-search-text {
    font-size: 16px;
    letter-spacing: -.2px;
    width: 155px;
    white-space: nowrap;
}
.task-search-btn {
    width: 70px;
    margin-left: auto;
    height: 43px;
    line-height: 43px;
    text-align: center;
    background: #2a8cff;
    color: #fff;
    font-size: 15px;
}
.task-pipe {
    width: 4px;
    height: 26px;
    margin-left: 8px;
    margin-right: 13px;
    border-left: 1px solid #222;
    border-right: 1px solid #222;
}
.app {
    position: relative;
    width: 61px;
    height: 50px;
    display: flex;
    align-items: center;
    justify-content: center;
}
.app-edge {
    width: 61px;
}
.app-on {
    background: #e8e8e8;
    margin-left: 2px;
}
.run-bar {
    position: absolute;
    left: 5px;
    right: 5px;
    bottom: 0;
    height: 3px;
    background: #0a78d4;
}
.app-on .run-bar {
    left: 0;
    right: 0;
}
.run-bar-split {
    background: linear-gradient(90deg, #0a78d4 80%, #5aaee8 80%);
}
.ie-green {
    font-size: 38px;
    line-height: 40px;
    font-weight: bold;
    color: #6cc62c;
    padding-bottom: 6px;
}
.ie-ring {
    position: absolute;
    left: 14px;
    top: 6px;
}
.excel-x {
    fill: #fff;
    font-family: "Liberation Sans", sans-serif;
    font-size: 15px;
    font-weight: bold;
}
.tray {
    margin-left: auto;
    display: flex;
    align-items: center;
    padding-right: 22px;
}
.tray-item {
    position: relative;
    width: 30px;
    display: flex;
    justify-content: center;
}
.tray-people {
    margin-right: 14px;
}
.tray-sound {
    margin-left: -3px;
}
.tray-pen {
    margin-left: 5px;
}
.tray-ying {
    margin-left: 6px;
    margin-right: 4px;
    font-size: 17px;
    color: #777;
}
.sogou-tray {
    width: 20px;
    height: 20px;
    border-radius: 4px;
    background: #f4511e;
    color: #fff;
    font-size: 18px;
    font-weight: bold;
    line-height: 20px;
    text-align: center;
    transform: rotate(-10deg);
}
.clock {
    width: 85px;
    margin-left: 13px;
    font-size: 15.5px;
    line-height: 22px;
    text-align: center;
    white-space: nowrap;
}
.tray-video {
    width: 34px;
    margin-left: 12px;
}
.badge {
    position: absolute;
    right: 0;
    bottom: -4px;
    width: 17px;
    height: 17px;
    border-radius: 2px;
    background: #d40000;
    color: #fff;
    font-size: 11px;
    line-height: 17px;
    text-align: center;
    font-weight: normal;
}
.tray-note {
    width: 38px;
    margin-left: 14px;
}
```

FILE: script.js
```js
// builds the sheet grid, rows 1-29 and columns A-U (U is cut off)
const widths = [34, 130, 110, 149, 116, 129];
const letters = "ABCDEFGHIJKLMNOPQRST".split("");

const rows = {
    4: ["CCS-120", "1", "0", "235000", "#DIV/0!"],
    5: ["CCS-128", "2", "520000", "181290.56", "0.651364308"],
    6: ["CCS-192", "2", "600000", "216185.26", "0.639691233"],
    7: ["MMS-120A4", "1", "90000", "61977.79", "0.311357889"],
    8: ["SX-D-128", "7", "1585000", "1047900.82", "0.338863836"],
    9: ["SX-D-256", "1", "460000", "191408.59", "0.58389437"],
    10: ["SX-G-128", "6", "513000", "767783.54", "-0.496654074"],
    11: ["SX-G-192", "3", "375000", "223404.13", "0.404255653"],
    12: ["SX-G-192<span class=\"cjk\">换代</span>", "1", "", "32427.6", "#DIV/0!"],
    13: ["SX-G-256", "3", "550000", "631869.93", "-0.148854418"],
    14: ["SX-G-256<span class=\"cjk\">换代</span>", "1", "0", "177625.24", "#DIV/0!"],
    15: ["<span class=\"cjk\">销售零件</span>", "10", "4000", "1500", "0.625"]
};
const pivotHead = ["行标签", "求和项:数量", "求和项:合同金额", "求和项:成本", "求和项:利润率"];
const pivotTotal = ["总计", "38", "4697000", "3768373.46", "0.19770631"];

let html = "<colgroup>";
for (let i = 0; i < 22; i++) {
    let w = i < widths.length ? widths[i] : 80;
    if (i === 21) w = 27;
    html += `<col style="width:${w}px">`;
}
html += "</colgroup>";

html += "<tr><th class=\"col-head corner\"><i></i></th>";
for (const l of letters) {
    html += `<th class="col-head${l === "G" ? " col-on" : ""}">${l}</th>`;
}
html += "<th class=\"col-head\"></th></tr>";

for (let r = 1; r <= 29; r++) {
    html += `<tr><th class="row-head${r === 6 ? " row-on" : ""}">${r}</th>`;
    for (let c = 0; c < 21; c++) {
        if (c < 5 && r === 3) {
            const filter = c === 0 ? "<span class=\"pivot-filter\"><i class=\"caret\"></i></span>" : "";
            html += `<td class="pivot-head">${pivotHead[c]}${filter}</td>`;
        } else if (c < 5 && r === 16) {
            html += `<td class="pivot-total${c > 0 ? " num" : ""}">${pivotTotal[c]}</td>`;
        } else if (c < 5 && rows[r]) {
            const val = rows[r][c];
            let cls = c === 0 ? "text" : "num";
            if (val === "#DIV/0!") cls = "center";
            const last = c === 4 ? "plain-last" : "plain";
            html += `<td class="${cls} ${last}">${val}</td>`;
        } else if (c === 6 && r === 6) {
            html += "<td class=\"selected\"><i></i></td>";
        } else {
            html += "<td></td>";
        }
    }
    html += "</tr>";
}

document.getElementById("grid").innerHTML = html;
```
